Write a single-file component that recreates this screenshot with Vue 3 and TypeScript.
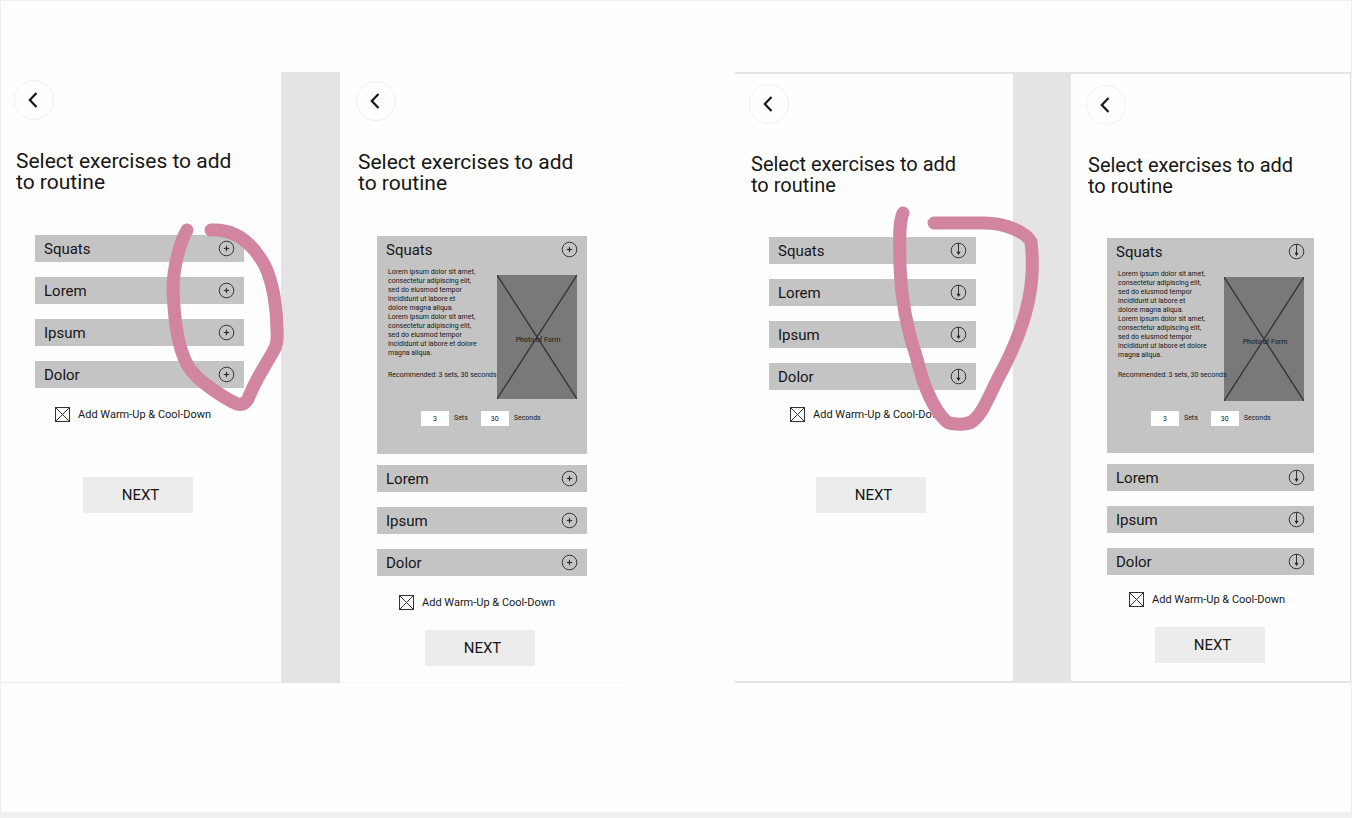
<script setup lang="ts">
import { ref } from 'vue'

interface Row {
  name: string
  open: boolean
}

interface Screen {
  id: string
  kind: 'list' | 'detail'
  rows: Row[]
  stroke?: string
  strokeBox?: string
  warmUp: boolean
}

interface Board {
  id: string
  icon: 'plus' | 'down'
  screens: Screen[]
}

const names = ['Squats', 'Lorem', 'Ipsum', 'Dolor']
const makeRows = (open: boolean): Row[] => names.map((name, i) => ({ name, open: open && i === 0 }))

const description = [
  'Lorem ipsum dolor sit amet,',
  'consectetur adipiscing elit,',
  'sed do eiusmod tempor',
  'incididunt ut labore et',
  'dolore magna aliqua.',
  'Lorem ipsum dolor sit amet,',
  'consectetur adipiscing elit,',
  'sed do eiusmod tempor',
  'incididunt ut labore et dolore',
  'magna aliqua.',
]

const boards = ref<Board[]>([
  {
    id: 'before',
    icon: 'plus',
    screens: [
      {
        id: 'before-list',
        kind: 'list',
        rows: makeRows(false),
        strokeBox: '1 72 340 370',
        stroke:
          'M187 230C180 242 173 268 173 290C174 312 176 345 188 366C198 382 226 399 237 404Q244 406 248 399C255 380 267 363 274 350Q278 343 277 330C277 308 273 283 265 266C258 253 242 228 211 230',
        warmUp: true,
      },
      { id: 'before-detail', kind: 'detail', rows: makeRows(true), warmUp: true },
    ],
  },
  {
    id: 'after',
    icon: 'down',
    screens: [
      {
        id: 'after-list',
        kind: 'list',
        rows: makeRows(false),
        strokeBox: '735 72 336 370',
        stroke:
          'M903 213C898 225 900 247 900 267C901 297 906 327 917 359C923 384 933 408 945 420Q948 424 957 424Q967 425 973 421C985 411 990 392 1003 369C1017 342 1030 308 1032 275Q1033 258 1031 242C1026 232 1005 223 984 223L934 223',
        warmUp: true,
      },
      { id: 'after-detail', kind: 'detail', rows: makeRows(true), warmUp: true },
    ],
  },
])

const sets = ref('3')
const seconds = ref('30')
</script>

<template>
  <main class="stage">
    <section v-for="board in boards" :key="board.id" class="board" :class="board.id">
      <article
        v-for="screen in board.screens"
        :key="screen.id"
        class="screen"
        :class="screen.kind"
      >
        <button class="back" type="button" aria-label="Back">
          <svg width="12" height="18" viewBox="0 0 12 18">
            <path d="M9.500 2 2.800 9l6.700 7" fill="none" stroke="#161616" stroke-width="2.200" />
          </svg>
        </button>
        <h1 class="title">Select exercises to add<br />to routine</h1>

        <div class="rows">
          <div v-for="row in screen.rows" :key="row.name" class="row" :class="{ open: row.open }">
            <button class="row-head" type="button" :aria-expanded="row.open">
              <span>{{ row.name }}</span>
              <svg class="row-icon" width="17" height="17" viewBox="0 0 17 17" fill="none" stroke="#333">
                <circle cx="8.500" cy="8.500" r="7.300" />
                <template v-if="board.icon === 'plus'">
                  <path d="M8.500 5.800v5.400M5.800 8.500h5.400" />
                  <circle cx="8.500" cy="8.500" r="1.300" fill="#333" stroke="none" />
                </template>
                <template v-else>
                  <path d="M8.500 1.200v11" />
                  <path d="M6.500 9.800h4L8.500 13z" fill="#222" stroke="none" />
                </template>
              </svg>
            </button>

            <div v-if="row.open" class="panel">
              <div class="media">
                <div class="copy">
                  <p class="description">
                    <template v-for="(line, i) in description" :key="i">{{ line }}<br /></template>
                  </p>
                  <p class="recommended">Recommended: 3 sets, 30 seconds</p>
                </div>
                <div class="photo">
                  <svg class="cross" viewBox="0 0 80 124" preserveAspectRatio="none">
                    <path d="M0 0 80 124M80 0 0 124" fill="none" stroke="#333" stroke-width="1.300" />
                  </svg>
                  <span>Photo of Form</span>
                </div>
              </div>
              <div class="amounts">
                <input :id="screen.id + '-sets'" v-model="sets" class="amount" type="text" />
                <label :for="screen.id + '-sets'">Sets</label>
                <input :id="screen.id + '-seconds'" v-model="seconds" class="amount" type="text" />
                <label :for="screen.id + '-seconds'">Seconds</label>
              </div>
            </div>
          </div>
        </div>

        <label class="warm-up">
          <span class="box">
            <input v-model="screen.warmUp" type="checkbox" />
            <svg v-if="screen.warmUp" viewBox="0 0 15 15" fill="none" stroke="#333">
              <path d="M1 1l13 13M14 1 1 14" />
            </svg>
          </span>
          <span>Add Warm-Up &amp; Cool-Down</span>
        </label>
        <button class="next" type="button">NEXT</button>

        <svg v-if="screen.stroke" class="marker" :viewBox="screen.strokeBox" aria-hidden="true">
          <path :d="screen.stroke" />
        </svg>
      </article>
    </section>
  </main>
</template>

<style>
body {
  margin: 0;
  background: #eff0f1;
}
</style>

<style scoped>
.stage {
  box-sizing: border-box;
  display: grid;
  grid-template-columns: minmax(0, 622fr) minmax(0, 616fr);
  gap: 112px;
  align-items: start;
  margin: 1px 1px 6px;
  padding: 71px 0 129px;
  background: #fefefe;
  color: #161616;
  font-family: Roboto, "Liberation Sans", sans-serif;
}

button,
input {
  margin: 0;
  padding: 0;
  border: 0;
  border-radius: 0;
  color: inherit;
  font: inherit;
}

.board {
  display: grid;
  box-sizing: border-box;
  min-height: 611px;
  background: #e4e4e4;
}

.before {
  grid-template-columns: minmax(0, 280fr) minmax(0, 283fr);
  gap: 59px;
}

.after {
  grid-template-columns: minmax(0, 278fr) minmax(0, 279fr);
  gap: 58px;
  padding: 2px 1px 2px 0;
}

.screen {
  position: relative;
  display: flex;
  flex-direction: column;
  align-items: flex-start;
  box-sizing: border-box;
  background: #fefefe;
}

.before .screen {
  border-bottom: 1px solid #ededed;
}

.before .detail {
  border-bottom-color: #f7f7f7;
}

.list {
  padding: 8px 37px 0 13px;
}

.detail {
  padding: 9px 36px 0 16px;
}

.after .list {
  padding: 10px 37px 0 14px;
}

.after .detail {
  padding: 11px 36px 0 15px;
}

.back {
  display: grid;
  place-items: center;
  width: 40px;
  height: 40px;
  padding-right: 3px;
  border: 1px solid #f0f0f0;
  border-radius: 50%;
  background: #fefefe;
}

.title {
  margin: 31px 0 0 2px;
  font-size: 21px;
  font-weight: 400;
  line-height: 21px;
  white-space: nowrap;
}

.after .title {
  margin-top: 30px;
  font-size: 20px;
}

.rows {
  display: flex;
  flex-direction: column;
  gap: 15px;
  align-self: stretch;
  margin: 42px 0 0 21px;
}

.after .rows {
  margin-top: 41px;
}

.after .list .rows {
  margin-left: 20px;
}

.row {
  background: #c4c4c4;
}

.row.open {
  margin-bottom: -4px;
}

.row-head {
  display: flex;
  align-items: center;
  justify-content: space-between;
  width: 100%;
  height: 27px;
  padding: 0 9px;
  background: none;
  font-size: 15px;
  text-align: left;
}

.panel {
  padding: 12px 10px 28px 11px;
  font-size: 7px;
  line-height: 9px;
}

.after .panel {
  padding-bottom: 27px;
}

.media {
  display: flex;
}

.copy {
  z-index: 1;
  flex: 1;
  min-width: 0;
  margin-top: -7px;
  white-space: nowrap;
}

.description,
.recommended {
  margin: 0;
}

.recommended {
  margin-top: 13px;
}

.after .recommended {
  margin-top: 11px;
}

.photo {
  display: grid;
  flex: none;
  grid-template-columns: 80px;
  grid-template-rows: 124px;
  place-items: center;
  background: #797979;
}

.photo > * {
  grid-area: 1 / 1;
}

.cross {
  width: 100%;
  height: 100%;
}

.photo span {
  margin: 6px 0 0 2px;
}

.amounts {
  display: flex;
  align-items: center;
  gap: 5px;
  margin: 12px 0 0 33px;
}

.after .amounts {
  margin-top: 10px;
}

.amount {
  width: 28px;
  height: 15px;
  background: #fff;
  text-align: center;
}

.amounts label + .amount {
  margin-left: 8px;
}

.warm-up {
  display: flex;
  align-items: center;
  gap: 8px;
  margin: 19px 0 0 41px;
  font-size: 11px;
  line-height: 15px;
  white-space: nowrap;
}

.after .warm-up {
  margin-top: 17px;
}

.detail .warm-up {
  margin-left: 43px;
}

.box {
  display: grid;
  width: 15px;
  height: 15px;
}

.box > * {
  grid-area: 1 / 1;
  width: 15px;
  height: 15px;
}

.box input {
  box-sizing: border-box;
  border: 1px solid #333;
  appearance: none;
}

.box svg {
  pointer-events: none;
}

.next {
  width: 110px;
  height: 36px;
  margin: 55px 0 0 69px;
  padding-left: 5px;
  background: #ececec;
  font-size: 15px;
}

.detail .next {
  margin-top: 20px;
}

.after .list .next {
  margin-left: 67px;
}

.marker {
  position: absolute;
  top: 0;
  right: -60px;
  z-index: 2;
  width: 340px;
  height: 370px;
  pointer-events: none;
}

.after .marker {
  top: -2px;
  right: -58px;
  width: 336px;
}

.marker path {
  fill: none;
  stroke: #d185a1;
  stroke-width: 13;
  stroke-linecap: round;
  stroke-linejoin: round;
}
</style>
